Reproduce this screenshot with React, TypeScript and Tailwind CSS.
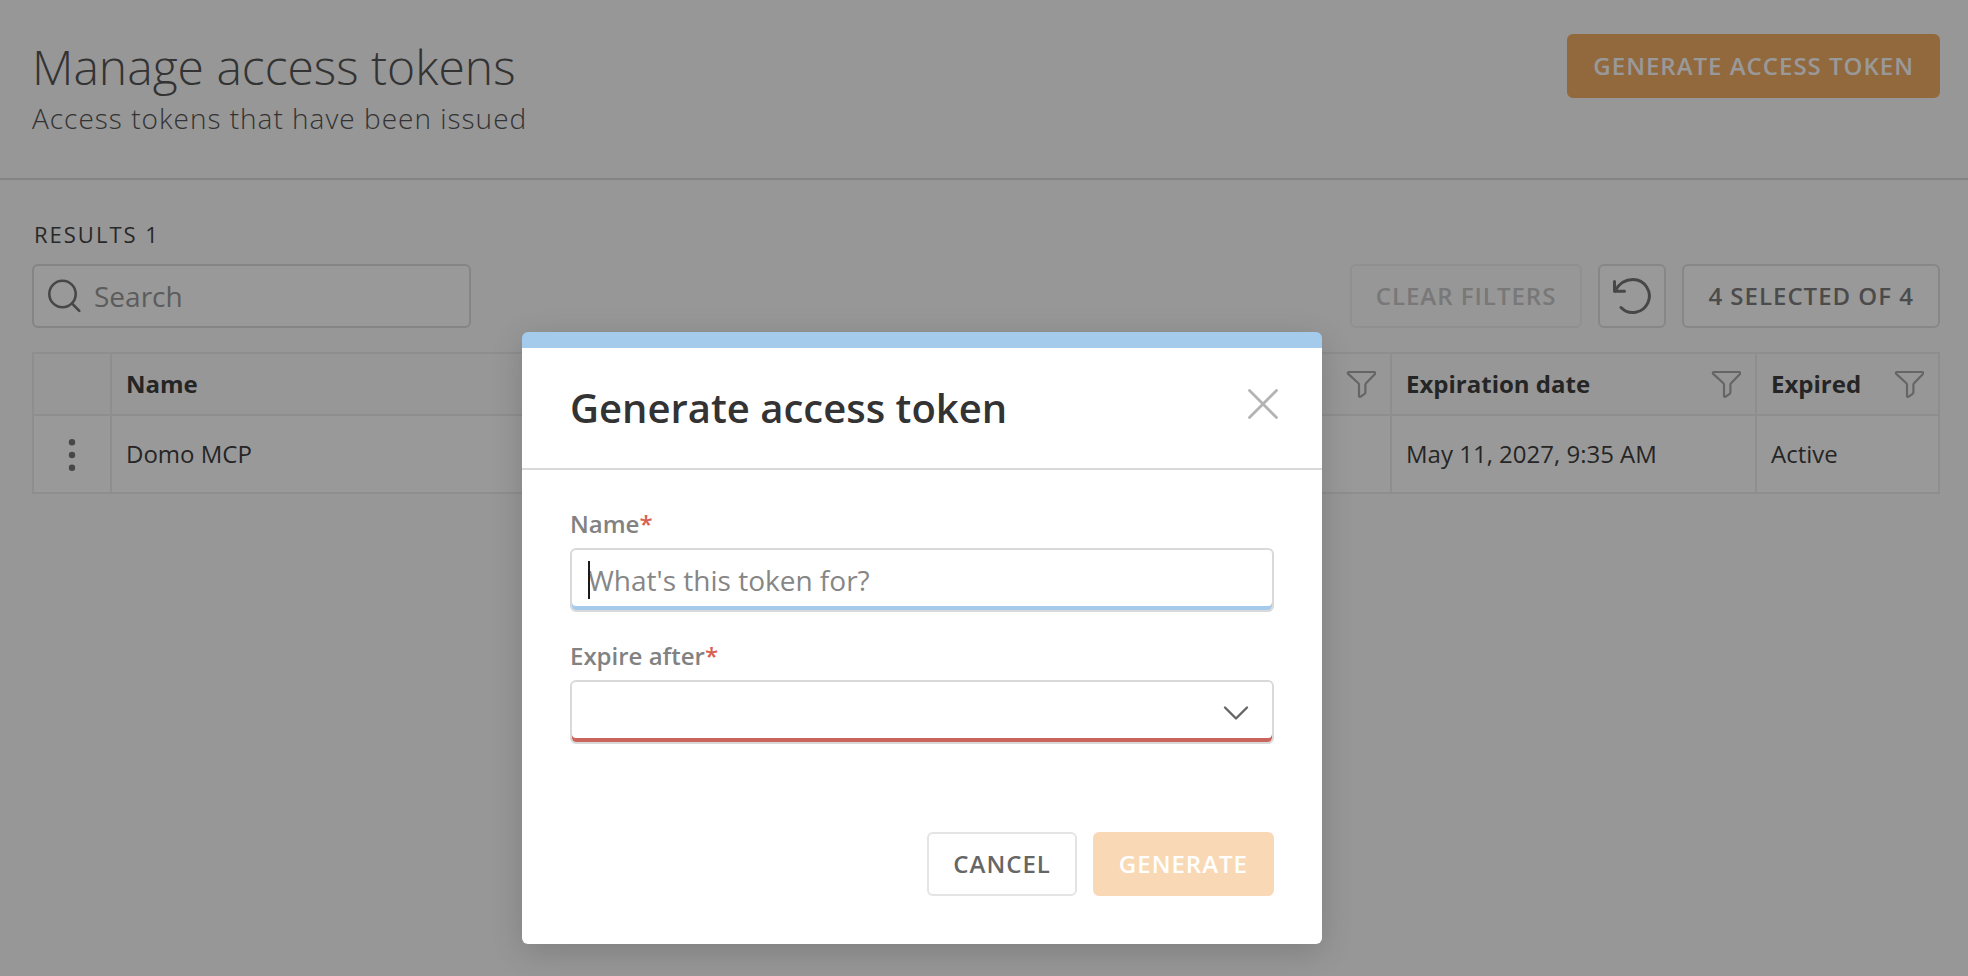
import type { ButtonHTMLAttributes, ReactNode } from "react";

function FunnelIcon() {
  return (
    <svg width="30" height="30" viewBox="0 0 30 30" fill="none" stroke="#a8a8a8" strokeWidth="2.2" strokeLinejoin="round" aria-hidden="true">
      <path d="M3 3h25.200c1 0 1.500 1.100.8 1.900L20 14.300c-.4.5-.6 1-.6 1.700v7.200c0 .7-.3 1.200-.8 1.600l-3.900 2.900c-.9.6-1.700 0-1.700-1V16c0-.7-.2-1.200-.6-1.700L2.200 4.900C1.500 4.100 2 3 3 3z" />
    </svg>
  );
}

function SearchIcon() {
  return (
    <svg width="34" height="34" viewBox="0 0 34 34" fill="none" stroke="#777" strokeWidth="2.600" strokeLinecap="round" aria-hidden="true">
      <circle cx="14.500" cy="15" r="13.200" />
      <path d="M24 24.500L31.300 31.800" />
    </svg>
  );
}

function ResetIcon() {
  return (
    <svg width="40" height="40" viewBox="0 0 40 40" fill="none" stroke="#777" strokeWidth="3" strokeLinecap="round" strokeLinejoin="round" aria-hidden="true">
      <path d="M2.500 5.500v9.800h10" />
      <path d="M3 15C6.500 8.500 12.500 3.500 21 3.500A16.500 16.500 0 1 1 9 31.500" />
    </svg>
  );
}

type Variant = "primary" | "primaryDisabled" | "outline" | "outlineDisabled" | "cancel";

const variants: Record<Variant, string> = {
  primary: "border-[#f4ae67] bg-[#f4ae67] text-white",
  primaryDisabled: "border-[#f9d9b5] bg-[#f9d9b5] text-white",
  outline: "border-[#e1e1e1] bg-white text-[#7d7d7d]",
  outlineDisabled: "border-[#f0f0f0] bg-transparent text-[#c8c8c8]",
  cancel: "border-[#e4e4e4] bg-white text-[#666]",
};

function Button({
  variant,
  children,
  ...rest
}: { variant: Variant; children: ReactNode } & ButtonHTMLAttributes<HTMLButtonElement>) {
  return (
    <button
      type="button"
      className={`h-16 shrink-0 rounded-md border-2 px-6 text-2xl font-semibold tracking-[1px] uppercase ${variants[variant]}`}
      {...rest}
    >
      {children}
    </button>
  );
}

function HeaderCell({ label, filter }: { label?: string; filter?: boolean }) {
  return (
    <th scope="col" className="border-2 border-[#ededed] px-3.5 py-0 text-left font-bold">
      <div className="flex items-center justify-between">
        <span>{label}</span>
        {filter && (
          <button type="button" aria-label="Filter column">
            <FunnelIcon />
          </button>
        )}
      </div>
    </th>
  );
}

function Cell({ children }: { children?: ReactNode }) {
  return <td className="border-2 border-[#ededed] px-3.5 py-0">{children}</td>;
}

function TokensPage() {
  return (
    <div className="min-h-screen bg-[#fcfcfc] text-[#3f3f3f]">
      <header className="flex items-start justify-between border-b-2 border-[#dcdcdc] pt-[34px] pr-7 pb-[42px] pl-8">
        <div>
          <h1 className="text-5xl leading-[66px] font-light text-[#555]">Manage access tokens</h1>
          <p className="text-[28px] leading-9 font-light tracking-[1px] text-[#555]">
            Access tokens that have been issued
          </p>
        </div>
        <Button variant="primary">Generate access token</Button>
      </header>

      <main className="pt-[38px] pr-7 pl-8">
        <p className="pl-0.5 text-[22px] leading-8 tracking-[2px] text-[#444]">RESULTS 1</p>
        <div className="mt-3.5 flex items-center justify-between">
          <label className="flex h-16 w-[439px] items-center gap-3 rounded-md border-2 border-[#dedede] bg-white px-3.5">
            <SearchIcon />
            <input
              type="search"
              aria-label="Search"
              placeholder="Search"
              className="min-w-0 flex-1 bg-transparent text-[28px] outline-none placeholder:text-[#9a9a9a]"
            />
          </label>
          <div className="flex gap-4">
            <Button variant="outlineDisabled" disabled>
              Clear filters
            </Button>
            <button
              type="button"
              aria-label="Reset"
              className="flex h-16 w-[68px] items-center justify-center rounded-md border-2 border-[#e1e1e1] bg-white"
            >
              <ResetIcon />
            </button>
            <Button variant="outline">4 selected of 4</Button>
          </div>
        </div>

        <table className="mt-6 w-full table-fixed border-collapse text-2xl">
          <colgroup>
            <col className="w-[78px]" />
            <col />
            <col />
            <col className="w-[365px]" />
            <col className="w-[183px]" />
          </colgroup>
          <thead>
            <tr className="h-[62px]">
              <th scope="col" aria-label="Actions" className="border-2 border-[#ededed]" />
              <HeaderCell label="Name" />
              <HeaderCell filter />
              <HeaderCell label="Expiration date" filter />
              <HeaderCell label="Expired" filter />
            </tr>
          </thead>
          <tbody>
            <tr className="h-[78px] bg-white">
              <td className="border-2 border-[#ededed] p-0 text-center">
                <button type="button" aria-label="Row actions" className="inline-flex align-middle">
                  <svg width="8" height="32" viewBox="0 0 8 32" fill="#777" aria-hidden="true">
                    <circle cx="4" cy="3.200" r="3.200" />
                    <circle cx="4" cy="16" r="3.200" />
                    <circle cx="4" cy="28.800" r="3.200" />
                  </svg>
                </button>
              </td>
              <Cell>Domo MCP</Cell>
              <Cell />
              <Cell>May 11, 2027, 9:35 AM</Cell>
              <Cell>Active</Cell>
            </tr>
          </tbody>
        </table>
      </main>
    </div>
  );
}

function FieldLabel({ htmlFor, children }: { htmlFor: string; children: ReactNode }) {
  return (
    <label htmlFor={htmlFor} className="block text-2xl leading-8 font-semibold text-[#828282]">
      {children}
      <span className="text-[#d95f50]">*</span>
    </label>
  );
}

function GenerateTokenDialog() {
  return (
    <div
      role="dialog"
      aria-modal="true"
      aria-labelledby="dialog-title"
      className="w-[800px] rounded-md border-t-16 border-[#a4caec] bg-white shadow-[0_8px_32px_rgba(0,0,0,0.16)]"
    >
      <div className="flex items-start justify-between border-b-2 border-[#d9d9d9] pt-8 pr-11 pb-8 pl-12">
        <h2 id="dialog-title" className="text-[40px] leading-[56px] font-semibold text-[#333]">
          Generate access token
        </h2>
        <button type="button" aria-label="Close" className="mt-2">
          <svg width="30" height="32" viewBox="0 0 30 32" stroke="#b3b3b3" strokeWidth="2.800" strokeLinecap="round" aria-hidden="true">
            <path d="M1.500 2.500l27 27M28.500 2.500l-27 27" />
          </svg>
        </button>
      </div>
      <form className="px-12 pt-[38px] pb-12">
        <FieldLabel htmlFor="token-name">Name</FieldLabel>
        <div className="relative mt-2">
          <input
            id="token-name"
            type="text"
            required
            placeholder="What's this token for?"
            className="block h-16 w-full rounded-md border-2 border-[#d9d9d9] bg-white px-4 text-[28px] shadow-[inset_0_-4px_0_#a4caec] outline-none placeholder:text-[#868686]"
          />
          <span className="absolute top-[13px] left-[18px] h-[38px] w-0.5 bg-[#1a1a1a]" />
        </div>
        <div className="mt-7">
          <FieldLabel htmlFor="expire-after">Expire after</FieldLabel>
          <div className="relative mt-2">
            <select
              id="expire-after"
              required
              defaultValue=""
              className="block h-16 w-full appearance-none rounded-md border-2 border-[#d9d9d9] bg-white px-4 text-[28px] shadow-[inset_0_-4px_0_#c9655c] outline-none"
            >
              <option value="" />
            </select>
            <svg
              className="pointer-events-none absolute top-6 right-6"
              width="28"
              height="18"
              viewBox="0 0 28 18"
              fill="none"
              stroke="#666"
              strokeWidth="2.400"
              strokeLinecap="round"
              strokeLinejoin="round"
              aria-hidden="true"
            >
              <path d="M3 3.500l11 11 11-11" />
            </svg>
          </div>
        </div>
        <div className="mt-22 flex justify-end gap-4">
          <Button variant="cancel">Cancel</Button>
          <Button variant="primaryDisabled" disabled>
            Generate
          </Button>
        </div>
      </form>
    </div>
  );
}

export default function App() {
  return (
    <div className="relative font-['Open_Sans','Noto_Sans',sans-serif]">
      <TokensPage />
      <div className="absolute inset-0 flex items-start justify-center bg-black/40 pt-[332px] pr-[124px]">
        <GenerateTokenDialog />
      </div>
    </div>
  );
}
